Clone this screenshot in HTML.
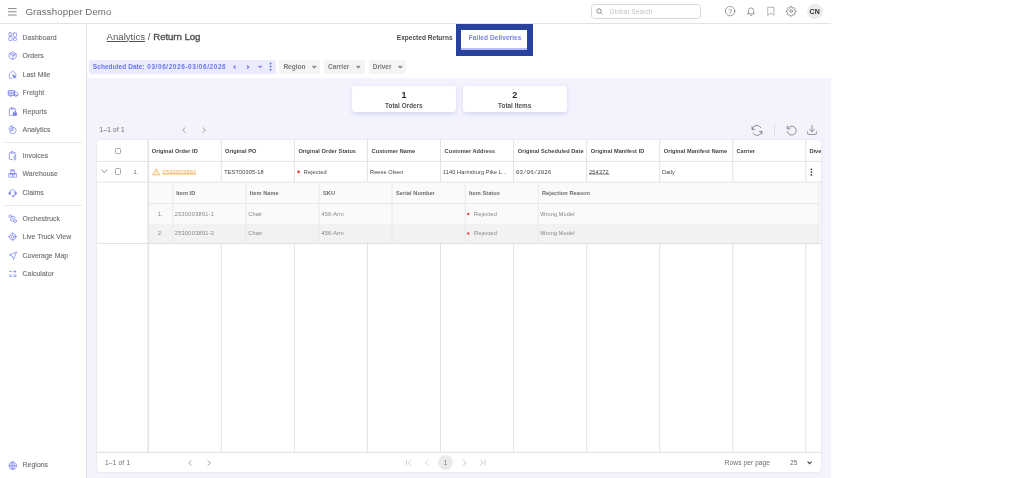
<!DOCTYPE html>
<html lang="en">
<head>
<meta charset="utf-8">
<title>Grasshopper Demo - Return Log</title>
<style>
*{box-sizing:border-box;margin:0;padding:0}
html,body{width:1024px;height:478px;overflow:hidden;background:#fff;font-family:"Liberation Sans",sans-serif;color:#444}
.a{position:absolute;white-space:nowrap}
svg{overflow:visible}
#app{position:absolute;left:0;top:0;width:831px;height:478px;overflow:hidden;will-change:transform}
#topbar{left:0;top:0;width:831px;height:24px;border-bottom:1px solid #e2e2e2;background:#fff}
#side{left:0;top:24px;width:87px;height:454px;border-right:1px solid #e0e0e6;background:#fff}
#main{left:87px;top:78px;width:744px;height:400px;background:#f3f3fe}
.nav{left:22.6px;font-size:6.9px;color:#6e6e6e;line-height:8px;letter-spacing:.03px;-webkit-text-stroke:.12px #6e6e6e}
.ico{left:8px;width:9.4px;height:9.4px;stroke:#7a83f4;stroke-width:1.9;fill:none;stroke-linecap:round;stroke-linejoin:round}
.sep{left:4px;width:78px;height:1px;background:#e8e8e8}
.chip{height:13.5px;top:60px;border-radius:2px;background:#f4f4f4;font-size:6.5px;line-height:13.5px;color:#7a7a7a;padding:0 4px;font-weight:bold}
.car{top:65px;stroke:#707070;stroke-width:1.150;fill:none}
.card{top:85.5px;height:26.5px;width:104.4px;background:#fff;border-radius:3px;box-shadow:0 1.5px 4px rgba(70,70,140,.16);text-align:center}
.card b{display:block;font-size:9px;line-height:10px;margin-top:4px;color:#2a2a2a}
.card span{display:block;font-size:6.4px;line-height:8px;margin-top:2.5px;color:#555;font-weight:bold}
.tic{stroke:#7c7c7c;stroke-width:.8;fill:none;stroke-linecap:round;stroke-linejoin:round}
#tbl{left:97px;top:140px;width:724px;height:331.500px;background:#fff;border-radius:4px;overflow:hidden;box-shadow:0 0 0 .8px #e9e9f4,0 1px 2px rgba(80,80,140,.06)}
#tin{left:1px;top:1px;width:723px;height:330px}
.vl{top:0;width:1px;height:312px;background:#e6e6e6}
.hl{left:0;height:1px;width:723px;background:#e6e6e6}
.th{top:0;height:21px;line-height:21px;font-size:5.6px;font-weight:bold;color:#444;letter-spacing:.05px}
.td{top:21px;height:21px;line-height:21px;font-size:5.6px;color:#444;letter-spacing:.1px}
.sth{font-size:5.6px;font-weight:bold;color:#6a6a6a;line-height:21px;height:21px;top:42px;letter-spacing:.07px}
.std{font-size:5.6px;color:#858585;line-height:20px;height:20px;letter-spacing:.12px}
.cb{width:6.4px;height:6.4px;border:.8px solid #a6a6a6;border-radius:1.4px;background:#fff}
.pg{stroke:#c4c4c4;stroke-width:.8;fill:none;stroke-linecap:round;stroke-linejoin:round}
.ft{font-size:6.5px;line-height:8px;color:#6a6a6a;letter-spacing:.12px}
</style>
</head>
<body>
<div id="app">
<div class="a" id="main"></div>

<!-- TOP BAR -->
<div class="a" id="topbar">
  <svg class="a" style="left:8.3px;top:8px" width="9" height="8" viewBox="0 0 9 8"><path d="M0 .6h8.6M0 3.8h8.6M0 7h8.6" stroke="#707070" stroke-width=".85" fill="none"/></svg>
  <div class="a" style="left:25.4px;top:5px;font-size:9.7px;line-height:13px;color:#6a6a6a;letter-spacing:.1px">Grasshopper Demo</div>
  <div class="a" style="left:591px;top:4px;width:110px;height:14.500px;border:1px solid #d8d8d8;border-radius:3.500px"></div>
  <svg class="a" style="left:596px;top:8.300px" width="7" height="7" viewBox="0 0 7 7"><circle cx="3" cy="3" r="2.200" stroke="#707070" stroke-width=".8" fill="none"/><path d="M4.600 4.600L6.300 6.300" stroke="#707070" stroke-width=".8"/></svg>
  <div class="a" style="left:609.500px;top:7.500px;font-size:6.500px;line-height:8px;color:#c4c4c4;letter-spacing:.15px">Global Search</div>
  <svg class="a tic" style="left:724.900px;top:6.100px;stroke-width:1.750" width="10.300" height="10.300" viewBox="0 0 24 24"><circle cx="12" cy="12" r="11"/><text x="12" y="17.600" font-size="15.500" text-anchor="middle" fill="#747474" stroke="none" font-family="Liberation Sans, sans-serif">?</text></svg>
  <svg class="a tic" style="left:745.500px;top:6px;stroke-width:1.750" width="10.200" height="10.200" viewBox="0 0 24 24"><path d="M6 17V10.500a6 6 0 0 1 12 0V17l2 1.500H4z"/><path d="M10 21.500a2.100 2.100 0 0 0 4 0"/></svg>
  <svg class="a tic" style="left:765.900px;top:6.100px;stroke-width:1.600;stroke:#8c8c8c" width="10" height="10" viewBox="0 0 24 24"><path d="M5 3h14v19l-7-5.200L5 22z"/></svg>
  <svg class="a tic" style="left:786.300px;top:6.200px;stroke-width:1.750" width="10.200" height="10.200" viewBox="0 0 24 24"><circle cx="12" cy="12" r="3.200"/><path d="M10.300 1.500h3.400l.6 2.900 1.900.8 2.500-1.600 2.400 2.400-1.600 2.500.8 1.900 2.900.6v3.400l-2.900.6-.8 1.900 1.600 2.500-2.400 2.400-2.500-1.600-1.900.8-.6 2.900h-3.400l-.6-2.900-1.900-.8-2.500 1.600-2.400-2.400 1.600-2.500-.8-1.900-2.900-.6v-3.400l2.900-.6.800-1.900-1.600-2.500 2.400-2.400 2.500 1.600 1.900-.8z"/></svg>
  <div class="a" style="left:806.800px;top:3.700px;width:15.800px;height:15.800px;border-radius:8px;background:#ececec;text-align:center;font-size:7px;line-height:15.800px;font-weight:bold;color:#2a2a2a;letter-spacing:.1px">CN</div>
</div>

<!-- SIDEBAR -->
<div class="a" id="side"></div>
<div class="a nav" style="top:34px">Dashboard</div>
<div class="a nav" style="top:52px">Orders</div>
<div class="a nav" style="top:71px">Last Mile</div>
<div class="a nav" style="top:89px">Freight</div>
<div class="a nav" style="top:108px">Reports</div>
<div class="a nav" style="top:126px">Analytics</div>
<div class="a sep" style="top:142px"></div>
<div class="a nav" style="top:152px">Invoices</div>
<div class="a nav" style="top:170px">Warehouse</div>
<div class="a nav" style="top:189px">Claims</div>
<div class="a sep" style="top:205px"></div>
<div class="a nav" style="top:215px">Orchestruck</div>
<div class="a nav" style="top:233px">Live Truck View</div>
<div class="a nav" style="top:252px">Coverage Map</div>
<div class="a nav" style="top:270px">Calculator</div>
<div class="a nav" style="top:461px">Regions</div>
<svg class="a ico" style="left:8px;top:32.3px" viewBox="0 0 24 24"><rect x="2" y="2" width="8.500" height="7" rx="3"/><rect x="2" y="11.500" width="8.500" height="10.500" rx="3"/><rect x="13.500" y="2" width="8.500" height="10.500" rx="3"/><rect x="13.500" y="15" width="8.500" height="7" rx="3"/></svg>
<svg class="a ico" style="left:8px;top:50.8px" viewBox="0 0 24 24"><path d="M12 2.200l7.800 4a2 2 0 0 1 1.100 1.800v8a2 2 0 0 1-1.100 1.800l-7.800 4-7.800-4A2 2 0 0 1 3.100 16V8a2 2 0 0 1 1.100-1.800z"/><path d="M3.600 7.200L12 11.500l8.400-4.300M12 11.500v10M7.700 4.500l8.500 4.400v3.600"/></svg>
<svg class="a ico" style="left:8px;top:69.6px" viewBox="0 0 24 24"><path d="M9.500 21.500H5.500a2 2 0 0 1-2-2V10l8.500-7.500 8.500 7.500v1.500"/><path d="M12.500 12.500l8.500 3.300-3.600 1.500-1.600 3.700z" fill="#7a83f4"/><path d="M17.400 17.300l3.200 3.400"/></svg>
<svg class="a ico" style="left:7.6px;top:87.500px;width:10.400px;height:10.400px" viewBox="0 0 24 24"><path d="M1.500 6h13.500v11h-13.500zM15 9h4.500l3.500 3.800V17h-8z"/><path d="M1.500 9.700h13.500M1.500 13.300h13.500" /><circle cx="6.500" cy="17.800" r="1.900" fill="#fff"/><circle cx="18" cy="17.800" r="1.900" fill="#fff"/></svg>
<svg class="a ico" style="left:8px;top:106.5px" viewBox="0 0 24 24"><path d="M10 21.500H5.500a2 2 0 0 1-2-2V6a2 2 0 0 1 2-2h2M15.500 4h2a2 2 0 0 1 2 2v5"/><rect x="7.500" y="2" width="8" height="4" rx="1.500"/><rect x="13" y="15" width="9" height="7" rx="1.500" fill="#7a83f4"/><path d="M15 15v-1.500a2.500 2.500 0 0 1 5 0V15"/></svg>
<svg class="a ico" style="left:8px;top:124.8px" viewBox="0 0 24 24"><path d="M12.500 5.500a8.300 8.300 0 1 1-8.300 8.300h8.300z"/><path d="M9.500 2.500v8h-8a8 8 0 0 1 8-8z" transform="translate(1,0)"/></svg>
<svg class="a ico" style="left:8px;top:150.7px" viewBox="0 0 24 24"><path d="M11 21.500H5.500a2 2 0 0 1-2-2V6a2 2 0 0 1 2-2h2M15.500 4h2a2 2 0 0 1 2 2v5"/><rect x="7.500" y="2" width="8" height="4" rx="1.500"/><path d="M20.500 14.500c-.6-1-1.600-1.400-2.800-1.400-1.600 0-2.700.8-2.700 2.100 0 2.900 5.700 1.300 5.700 4.200 0 1.300-1.200 2.100-2.900 2.100-1.300 0-2.400-.5-3-1.500M17.700 11.500v12" stroke-width="1.700"/></svg>
<svg class="a ico" style="left:8px;top:169.3px" viewBox="0 0 24 24"><rect x="7" y="2.500" width="10" height="9" rx="1"/><rect x="2" y="11.500" width="10" height="9.500" rx="1"/><rect x="12" y="11.500" width="10" height="9.500" rx="1"/><path d="M10.500 2.500v3h3v-3M5.500 11.500v3h3v-3M15.500 11.500v3h3v-3"/></svg>
<svg class="a ico" style="left:8px;top:187.6px" viewBox="0 0 24 24"><path d="M5.500 10.500a6.500 6.500 0 0 1 13 0"/><path d="M5.500 10.500H4.500a2 2 0 0 0-2 2v2a2 2 0 0 0 2 2h1zM18.500 10.500h1a2 2 0 0 1 2 2v2a2 2 0 0 1-2 2h-1z" fill="#7a83f4"/><path d="M18.500 16.500c0 2.500-2 4-5 4.200"/><circle cx="12" cy="20.800" r="1.300" fill="#7a83f4"/></svg>
<svg class="a ico" style="left:8px;top:213.5px" viewBox="0 0 24 24"><circle cx="5.800" cy="5.800" r="3.400"/><circle cx="18.200" cy="18.200" r="3.400"/><path d="M9.500 6.500H15a2.800 2.800 0 0 1 0 5.600H9a2.800 2.800 0 0 0 0 5.600h5.400"/></svg>
<svg class="a ico" style="left:8px;top:231.7px" viewBox="0 0 24 24"><circle cx="12" cy="12" r="8"/><circle cx="12" cy="12" r="3.500"/><path d="M12 1.500V4M12 20v2.500M1.500 12H4M20 12h2.500"/></svg>
<svg class="a ico" style="left:8px;top:250.5px" viewBox="0 0 24 24"><path d="M21 3L3.500 10.200l7.300 3L14 20.500z"/></svg>
<svg class="a ico" style="left:8px;top:268.7px" viewBox="0 0 24 24"><path d="M4 6.500h5M17.500 4v5M15 6.500h5M4 14.800l5 5M9 14.800l-5 5M15 15.500h5.500M15 19.300h5.500" stroke-width="2.100"/></svg>
<svg class="a ico" style="left:8px;top:460.6px" viewBox="0 0 24 24"><circle cx="12" cy="12" r="9.500"/><path d="M2.500 12h19M12 2.500c-6.500 5.500-6.500 13.500 0 19M12 2.500c6.500 5.500 6.500 13.500 0 19M12 2.500v19"/></svg>


<!-- PAGE HEADER -->
<div class="a" style="left:106.6px;top:29.5px;font-size:9.6px;line-height:13px;color:#555"><span style="text-decoration:underline;text-underline-offset:1px;text-decoration-thickness:.7px;letter-spacing:0">Analytics</span><span style="letter-spacing:.1px"> / </span><span style="color:#505050;-webkit-text-stroke:.36px #505050;letter-spacing:-.05px">Return Log</span></div>
<div class="a" style="left:396.8px;top:33.6px;font-size:6.5px;line-height:8px;font-weight:bold;color:#4a4a4a;letter-spacing:.03px">Expected Returns</div>
<div class="a" style="left:455.500px;top:24px;width:77.400px;height:31.600px;background:#29429d"></div>
<div class="a" style="left:461.2px;top:29.9px;width:66px;height:19.8px;background:#fff"></div>
<div class="a" style="left:461.2px;top:47.6px;width:66px;height:2.1px;background:#b7bcfb"></div>
<div class="a" style="left:468.8px;top:33.6px;font-size:6.5px;line-height:8px;font-weight:bold;color:#757ff2;letter-spacing:.08px">Failed Deliveries</div>

<!-- FILTER CHIPS -->
<div class="a chip" style="left:89px;width:186.5px;background:#eaebfe;color:#6b75ef;letter-spacing:.07px;padding-left:3.8px"><span id="sd1">Scheduled Date: </span><span id="sd2" style="letter-spacing:.56px;margin-left:.6px">03/06/2026-03/06/2026</span></div>
<svg class="a car" style="left:233.400px;top:64.900px;stroke:#6f79f0" width="4" height="5" viewBox="0 0 4 5"><path d="M2.500.5L.9 2.100l1.600 1.600"/></svg>
<svg class="a car" style="left:246.400px;top:64.900px;stroke:#6f79f0" width="4" height="5" viewBox="0 0 4 5"><path d="M1.100.5l1.600 1.600-1.600 1.600"/></svg>
<svg class="a car" style="left:257.500px;top:65.400px;stroke:#6f79f0" width="5" height="4" viewBox="0 0 5 4"><path d="M.6.900l1.600 1.600 1.600-1.600"/></svg>
<svg class="a" style="left:268px;top:61px" width="5" height="11" viewBox="0 0 5 11"><circle cx="2.500" cy="2.400" r="1" fill="#6570ec"/><circle cx="2.500" cy="5.600" r="1" fill="#6570ec"/><circle cx="2.500" cy="8.800" r="1" fill="#6570ec"/></svg>
<div class="a chip" style="left:279.400px;width:41px">Region</div>
<svg class="a car" style="left:312px;top:65.400px" width="5" height="4" viewBox="0 0 5 4"><path d="M.6.900l1.700 1.700 1.700-1.700"/></svg>
<div class="a chip" style="left:324px;width:40.700px">Carrier</div>
<svg class="a car" style="left:356px;top:65.400px" width="5" height="4" viewBox="0 0 5 4"><path d="M.6.900l1.700 1.700 1.700-1.700"/></svg>
<div class="a chip" style="left:368.7px;width:37.3px">Driver</div>
<svg class="a car" style="left:397.6px;top:65.400px" width="5" height="4" viewBox="0 0 5 4"><path d="M.6.900l1.700 1.700 1.700-1.700"/></svg>

<!-- STAT CARDS -->
<div class="a card" style="left:351.7px"><b>1</b><span>Total Orders</span></div>
<div class="a card" style="left:462.5px"><b>2</b><span>Total Items</span></div>

<!-- TABLE TOOLBAR -->
<div class="a ft" style="left:99.600px;top:125.800px;letter-spacing:.22px">1–1 of 1</div>
<svg class="a" style="left:182.4px;top:127px;stroke:#8a8a8a;stroke-width:.8;fill:none" width="4" height="6" viewBox="0 0 4 6"><path d="M3.4.4L.7 3l2.7 2.6"/></svg>
<svg class="a" style="left:201.7px;top:127px;stroke:#8a8a8a;stroke-width:.8;fill:none" width="4" height="6" viewBox="0 0 4 6"><path d="M.6.4L3.3 3 .6 5.600"/></svg>
<svg class="a tic" style="left:751px;top:124.800px;stroke:#707070;stroke-width:.75" width="12" height="11" viewBox="0 0 12 11"><path d="M1.300 4.300A4.600 4.600 0 0 1 9.800 2.600M10.700 6.500A4.600 4.600 0 0 1 2.200 8.200"/><path d="M1 1.700v2.700h2.700M11 9.100V6.400H8.300"/></svg>
<div class="a" style="left:774px;top:124px;width:1px;height:11.5px;background:#dcdce2"></div>
<svg class="a tic" style="left:786.300px;top:124.800px;stroke:#707070;stroke-width:.75" width="11" height="11" viewBox="0 0 11 11"><path d="M1.600 3.600A4.500 4.500 0 1 1 1.200 6.500"/><path d="M1.300 1v2.800h2.800"/></svg>
<svg class="a tic" style="left:807px;top:125.200px;stroke:#707070;stroke-width:.75" width="10" height="10" viewBox="0 0 10 10"><path d="M5 .5v6M2.500 4.200L5 6.600l2.500-2.400M.6 6.800v1.600a1 1 0 0 0 1 1h6.800a1 1 0 0 0 1-1V6.800"/></svg>

<div class="a" id="tbl"><div class="a" id="tin">
<!-- sub-table background -->
<div class="a" style="left:50px;top:41px;width:674px;height:62px;background:#fbfbfb"></div><div class="a" style="left:50px;top:41px;width:671px;height:62px;background:#fafafa"></div>
<div class="a" style="left:50px;top:83px;width:671px;height:19.400px;background:#f2f2f2"></div>
<svg class="a" style="left:0;top:0" width="723" height="330" viewBox="0 0 723 330" fill="none">
<path d="M-1 20.400H724M-1 41H724" stroke="#e3e3e3" stroke-width="1"/>
<path d="M50.200 62.700H721" stroke="#e8e8e8" stroke-width="1"/>
<path d="M-1 102.400H724" stroke="#dfdfdf" stroke-width="1"/>
<path d="M-1 311.300H724" stroke="#dcdcdc" stroke-width="1.100"/>
<path d="M123.27 -1V41M123.27 102.400V311.300M196.34 -1V41M196.34 102.400V311.300M269.41 -1V41M269.41 102.400V311.300M342.48 -1V41M342.48 102.400V311.300M415.55 -1V41M415.55 102.400V311.300M488.62 -1V41M488.62 102.400V311.300M561.69 -1V41M561.69 102.400V311.300M634.76 -1V41M634.76 102.400V311.300M707.83 -1V41M707.83 102.400V311.300" stroke="#e3e3e3" stroke-width="1"/>
<path d="M74.85 41V102.400M147.92 41V102.400M220.99 41V102.400M294.06 41V102.400M367.13 41V102.400M440.20 41V102.400M721 41V102.400" stroke="#e8e8e8" stroke-width="1"/>
<path d="M50.200 -1V311.300" stroke="#dedede" stroke-width="1.300"/>
<path d="M64.200 33H97.800" stroke="#f6a340" stroke-width=".75"/>
<circle cx="200.600" cy="30.800" r="1.350" fill="#ec3b30"/><circle cx="370.300" cy="73.100" r="1.250" fill="#ee4a40"/><circle cx="370.300" cy="92.600" r="1.250" fill="#ee4a40"/>
<path d="M491 33.100H511.400" stroke="#555" stroke-width=".7"/>
</svg>
<!-- header -->
<div class="a cb" style="left:17px;top:6.8px"></div>
<div class="a th" style="left:53.8px">Original Order ID</div>
<div class="a th" style="left:127px">Original PO</div>
<div class="a th" style="left:200.4px">Original Order Status</div>
<div class="a th" style="left:273.6px">Customer Name</div>
<div class="a th" style="left:346.6px">Customer Address</div>
<div class="a th" style="left:419.8px">Original Scheduled Date</div>
<div class="a th" style="left:492.8px">Original Manifest ID</div>
<div class="a th" style="left:565.8px">Original Manifest Name</div>
<div class="a th" style="left:638.4px">Carrier</div>
<div class="a th" style="left:711.4px">Dive</div>
<!-- row -->
<svg class="a" style="left:3.4px;top:28.2px" width="7" height="5" viewBox="0 0 7 5"><path d="M.4.6L3.3 3.6 6.200.6" stroke="#777" stroke-width=".8" fill="none"/></svg>
<div class="a cb" style="left:17px;top:27.4px"></div>
<div class="a td" style="left:35.5px;color:#666">1.</div>
<svg class="a" style="left:54.200px;top:26.500px" width="8.500" height="7.450" viewBox="0 0 8 7"><path d="M4 .8L7.300 6.400H.7z" stroke="#f6a340" stroke-width=".7" fill="none" stroke-linejoin="round"/><path d="M4 2.800v1.800M4 5.200v.4" stroke="#f6a340" stroke-width=".6"/></svg>
<div class="a td" style="left:64.2px;color:#f6a340;letter-spacing:.33px">2530003891</div>
<div class="a td" style="left:126.2px;letter-spacing:.13px">TEST00305-18</div>
<div class="a td" style="left:205.800px">Rejected</div>
<div class="a td" style="left:272px">Reese Olsen</div>
<div class="a td" style="left:345px">1140 Harrisburg Pike L...</div>
<div class="a td" style="left:418px;font-family:'Liberation Mono',monospace;font-size:5.9px;letter-spacing:0;top:21.4px">03/06/2026</div>
<div class="a td" style="left:491px;letter-spacing:.2px">254372</div>
<div class="a td" style="left:564px">Daily</div>
<svg class="a" style="left:711px;top:26px" width="5" height="10" viewBox="0 0 5 10"><circle cx="2.400" cy="2.300" r=".9" fill="#3a3a3a"/><circle cx="2.400" cy="5.100" r=".9" fill="#3a3a3a"/><circle cx="2.400" cy="7.900" r=".9" fill="#3a3a3a"/></svg>
<!-- sub header -->
<div class="a sth" style="left:78.2px">Item ID</div>
<div class="a sth" style="left:151.800px">Item Name</div>
<div class="a sth" style="left:225px">SKU</div>
<div class="a sth" style="left:298px">Serial Number</div>
<div class="a sth" style="left:371px">Item Status</div>
<div class="a sth" style="left:444px">Rejection Reason</div>
<!-- sub rows -->
<div class="a std" style="left:60px;top:62.6px">1.</div>
<div class="a std" style="left:76.8px;top:62.6px;letter-spacing:.28px">2530003891-1</div>
<div class="a std" style="left:150.300px;top:62.6px">Chair</div>
<div class="a std" style="left:223.5px;top:62.6px">456-Arm</div>
<div class="a std" style="left:376px;top:62.6px">Rejected</div>
<div class="a std" style="left:442.200px;top:62.6px">Wrong Model</div>
<div class="a std" style="left:60px;top:81.6px">2.</div>
<div class="a std" style="left:76.8px;top:81.6px;letter-spacing:.28px">2530003891-2</div>
<div class="a std" style="left:150.300px;top:81.6px">Chair</div>
<div class="a std" style="left:223.5px;top:81.6px">456-Arm</div>
<div class="a std" style="left:376px;top:81.6px">Rejected</div>
<div class="a std" style="left:442.200px;top:81.6px">Wrong Model</div>
<!-- footer -->
<div class="a ft" style="left:7px;top:317.500px;letter-spacing:.22px">1–1 of 1</div>
<svg class="a" style="left:90px;top:318.700px;stroke:#8a8a8a;stroke-width:.8;fill:none" width="4" height="6" viewBox="0 0 4 6"><path d="M3.4.4L.7 3l2.700 2.600"/></svg>
<svg class="a" style="left:109.4px;top:318.700px;stroke:#8a8a8a;stroke-width:.8;fill:none" width="4" height="6" viewBox="0 0 4 6"><path d="M.6.4L3.300 3 .6 5.600"/></svg>
<svg class="a pg" style="left:307.800px;top:319px" width="6" height="6" viewBox="0 0 6 6"><path d="M.5.300v4.800M5 .300L2.400 2.700 5 5.100"/></svg>
<svg class="a pg" style="left:327.400px;top:319px" width="4" height="6" viewBox="0 0 4 6"><path d="M3 .300L.5 2.700 3 5.100"/></svg>
<div class="a" style="left:339.800px;top:314.100px;width:15.4px;height:15.4px;border-radius:8px;background:#ebebeb;text-align:center;font-size:6.5px;line-height:15.4px;color:#777">1</div>
<svg class="a pg" style="left:364.500px;top:319px;stroke:#b4b4b4" width="4" height="6" viewBox="0 0 4 6"><path d="M.5.300L3 2.700.5 5.100"/></svg>
<svg class="a pg" style="left:381.900px;top:319px" width="6" height="6" viewBox="0 0 6 6"><path d="M5 .300v4.800M.5.300L3.100 2.700.5 5.100"/></svg>
<div class="a ft" style="left:626.800px;top:317.5px">Rows per page</div>
<div class="a ft" style="left:692px;top:317.5px;letter-spacing:.2px">25</div>
<svg class="a" style="left:709px;top:319.800px;stroke:#444;stroke-width:1.200;fill:none" width="6" height="4" viewBox="0 0 6 4"><path d="M.6.600l2 2.100 2-2.100"/></svg>
</div></div>
</div>
</body>
</html>
